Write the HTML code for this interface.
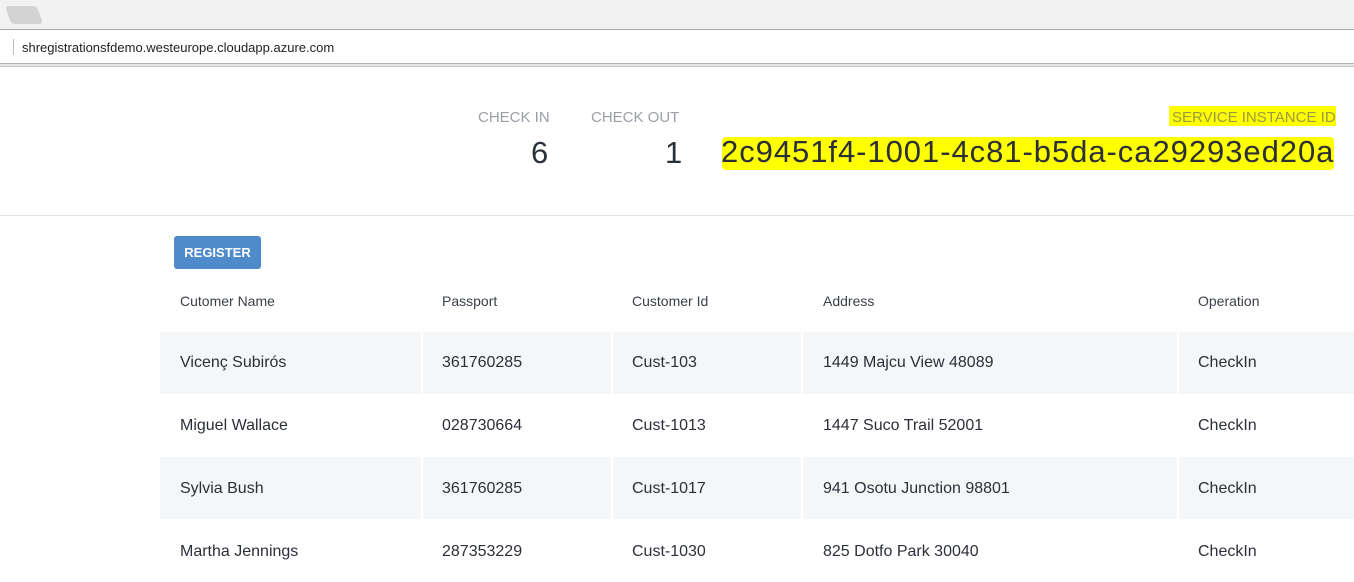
<!DOCTYPE html>
<html><head><style>
body{margin:0;width:1354px;height:578px;overflow:hidden;background:#fff;font-family:"Liberation Sans",sans-serif;position:relative;color:#2b2f38}
.a{position:absolute;white-space:nowrap}
.hd{font-size:15px;color:#9a9ea6}
.num{font-size:31px;color:#2b2f38}
.th{font-size:14px;color:#3a3f48}
.row{position:absolute;left:160px;width:1194px;height:62px}
.g{background:#f5f6f8}
.c{position:absolute;top:0;height:100%;width:2px;background:#fff}
.td{font-size:16px;color:#2b2f38}
</style></head><body>
<div class="a" style="left:0;top:0;width:1354px;height:29px;background:#f2f2f2;border-bottom:1px solid #a8a8a8"></div>
<div class="a" style="left:8px;top:6px;width:32px;height:18px;background:#d3d3d3;border-radius:4px;transform:skewX(20deg)"></div>
<div class="a" style="left:0;top:30px;width:1354px;height:33px;background:#fff;border-bottom:1px solid #b0b0b0"></div>
<div class="a" style="left:0;top:64px;width:1354px;height:2px;background:#e6e6e6;border-bottom:1px solid #c8c8c8"></div>
<div class="a" style="left:13px;top:39px;width:1px;height:16px;background:#bbb"></div>
<div class="a" style="left:22px;top:40px;font-size:13px;color:#222">shregistrationsfdemo.westeurope.cloudapp.azure.com</div>

<div class="a hd" style="left:478px;top:109px">CHECK IN</div>
<div class="a num" style="left:531px;top:135px">6</div>
<div class="a hd" style="left:591px;top:109px">CHECK OUT</div>
<div class="a num" style="left:665px;top:135px">1</div>
<div class="a" style="left:1169px;top:106px;width:167px;height:20px;background:#ffff00"></div>
<div class="a hd" style="left:1172px;top:109px;color:#9a9a40">SERVICE INSTANCE ID</div>
<div class="a" style="left:722px;top:137px;width:612px;height:33px;background:#ffff00;border-radius:4px"></div>
<div class="a num" style="left:721px;top:134px;letter-spacing:0.95px">2c9451f4-1001-4c81-b5da-ca29293ed20a</div>
<div class="a" style="left:0;top:215px;width:1354px;height:1px;background:#e5e5e5"></div>

<div class="a" style="left:174px;top:236px;width:87px;height:33px;background:#4f8bcb;border-radius:3px;color:#fff;font-size:13px;line-height:33px;text-align:center;font-weight:bold">REGISTER</div>

<div class="a th" style="left:180px;top:293px">Cutomer Name</div>
<div class="a th" style="left:442px;top:293px">Passport</div>
<div class="a th" style="left:632px;top:293px">Customer Id</div>
<div class="a th" style="left:823px;top:293px">Address</div>
<div class="a th" style="left:1198px;top:293px">Operation</div>

<div class="row g" style="top:332px"></div>
<div class="row" style="top:394px"></div>
<div class="row g" style="top:457px"></div>
<div class="row" style="top:520px"></div>
<div class="c a" style="left:421px;top:332px;height:246px"></div>
<div class="c a" style="left:611px;top:332px;height:246px"></div>
<div class="c a" style="left:801px;top:332px;height:246px"></div>
<div class="c a" style="left:1177px;top:332px;height:246px"></div>

<div class="a td" style="left:180px;top:354px">Vicenç Subirós</div>
<div class="a td" style="left:442px;top:354px">361760285</div>
<div class="a td" style="left:632px;top:354px">Cust-103</div>
<div class="a td" style="left:823px;top:354px">1449 Majcu View 48089</div>
<div class="a td" style="left:1198px;top:354px">CheckIn</div>

<div class="a td" style="left:180px;top:417px">Miguel Wallace</div>
<div class="a td" style="left:442px;top:417px">028730664</div>
<div class="a td" style="left:632px;top:417px">Cust-1013</div>
<div class="a td" style="left:823px;top:417px">1447 Suco Trail 52001</div>
<div class="a td" style="left:1198px;top:417px">CheckIn</div>

<div class="a td" style="left:180px;top:480px">Sylvia Bush</div>
<div class="a td" style="left:442px;top:480px">361760285</div>
<div class="a td" style="left:632px;top:480px">Cust-1017</div>
<div class="a td" style="left:823px;top:480px">941 Osotu Junction 98801</div>
<div class="a td" style="left:1198px;top:480px">CheckIn</div>

<div class="a td" style="left:180px;top:543px">Martha Jennings</div>
<div class="a td" style="left:442px;top:543px">287353229</div>
<div class="a td" style="left:632px;top:543px">Cust-1030</div>
<div class="a td" style="left:823px;top:543px">825 Dotfo Park 30040</div>
<div class="a td" style="left:1198px;top:543px">CheckIn</div>
</body></html>
